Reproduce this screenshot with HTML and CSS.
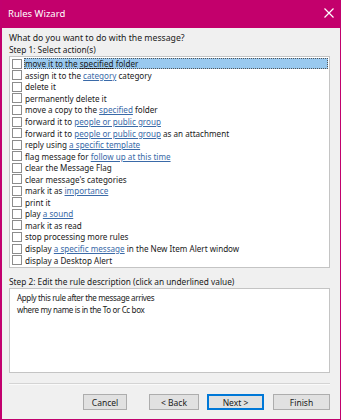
FILE: index.html
```html
<!DOCTYPE html>
<html lang="en">
<head>
    <meta charset="UTF-8">
    <meta name="viewport" content="width=device-width, initial-scale=1.0">
    <title>Rules Wizard</title>
    <link rel="stylesheet" href="styles.css">
</head>
<body>

    <div class="window">
        <div class="title-bar">
            <span class="title">Rules Wizard</span>
            <svg class="close" width="10" height="10" viewBox="0 0 10 10">
                <path d="M0.5 0.5 L9.5 9.5 M9.5 0.5 L0.5 9.5" stroke="#fff" stroke-width="1.2" fill="none"/>
            </svg>
        </div>

        <div class="content">
            <p class="label question">What do you want to do with the message?</p>
            <p class="label">Step 1: Select action(s)</p>

            <ul class="actions">
                <li class="selected"><span class="box"></span><span class="text">move it to the <u>specified</u> folder</span></li>
                <li><span class="box"></span><span class="text">assign it to the <a href="#">category</a> category</span></li>
                <li><span class="box"></span><span class="text">delete it</span></li>
                <li><span class="box"></span><span class="text">permanently delete it</span></li>
                <li><span class="box"></span><span class="text">move a copy to the <a href="#">specified</a> folder</span></li>
                <li><span class="box"></span><span class="text">forward it to <a href="#">people or public group</a></span></li>
                <li><span class="box"></span><span class="text">forward it to <a href="#">people or public group</a> as an attachment</span></li>
                <li><span class="box"></span><span class="text">reply using <a href="#">a specific template</a></span></li>
                <li><span class="box"></span><span class="text">flag message for <a href="#">follow up at this time</a></span></li>
                <li><span class="box"></span><span class="text">clear the Message Flag</span></li>
                <li><span class="box"></span><span class="text">clear message's categories</span></li>
                <li><span class="box"></span><span class="text">mark it as <a href="#">importance</a></span></li>
                <li><span class="box"></span><span class="text">print it</span></li>
                <li><span class="box"></span><span class="text">play <a href="#">a sound</a></span></li>
                <li><span class="box"></span><span class="text">mark it as read</span></li>
                <li><span class="box"></span><span class="text">stop processing more rules</span></li>
                <li><span class="box"></span><span class="text">display <a href="#">a specific message</a> in the New Item Alert window</span></li>
                <li><span class="box"></span><span class="text">display a Desktop Alert</span></li>
            </ul>

            <p class="label step2">Step 2: Edit the rule description (click an underlined value)</p>

            <div class="description">
                <p>Apply this rule after the message arrives</p>
                <p>where my name is in the To or Cc box</p>
            </div>

            <div class="separator"></div>

            <div class="buttons">
                <button class="btn cancel">Cancel</button>
                <button class="btn back">&lt; Back</button>
                <button class="btn next">Next &gt;</button>
                <button class="btn finish">Finish</button>
            </div>
        </div>
    </div>

</body>
</html>
```

FILE: styles.css
```css
body {
    margin: 0;
    font-family: "Noto Sans", "Open Sans", sans-serif;
    font-size: 9px;
    color: #1a1a1a;
}

.window {
    width: 341px;
    height: 420px;
    box-sizing: border-box;
    background-color: #f0f0f0;
    border: 1px solid #c2006e;
    border-top: none;
    border-left-width: 2px;
    display: flex;
    flex-direction: column;
}

.title-bar {
    height: 28px;
    flex-shrink: 0;
    background-color: #c3006c;
    display: flex;
    align-items: center;
    justify-content: space-between;
    padding: 0 6px 2px 6px;
    box-sizing: border-box;
}

.title {
    color: #fff;
    font-size: 9.5px;
}

.close {
    display: block;
}

.content {
    padding: 4px 10px 0 7px;
}

.label {
    margin: 0;
    line-height: 12px;
    font-size: 8.3px;
}

.question {
    font-size: 8.7px;
}

.actions {
    list-style: none;
    margin: 0;
    padding: 1px 1px 1px 0;
    background-color: #fff;
    border: 1px solid #c4c4c4;
    height: 208px;
}

.actions li {
    height: 11.55px;
    display: flex;
    align-items: center;
    font-size: 8.1px;
    white-space: nowrap;
}

.box {
    width: 8px;
    height: 8px;
    border: 1px solid #8c8c8c;
    background-color: #fff;
    margin: 0 2px 0 2px;
    flex-shrink: 0;
}

.text {
    flex: 1;
    line-height: 11px;
    padding-left: 1px;
}

.selected .text {
    background-color: #99c9ef;
    outline: 1px dotted #555;
    outline-offset: -1px;
}

.actions a {
    color: #3a6aa8;
    text-decoration: underline;
}

.step2 {
    margin-top: 8px;
}

.description {
    height: 85px;
    background-color: #fff;
    border: 1px solid #c4c4c4;
    padding: 3px 7px;
    box-sizing: border-box;
}

.description p {
    margin: 0;
    line-height: 12px;
    font-size: 8px;
    letter-spacing: -0.35px;
}

.separator {
    margin-top: 10px;
    border-top: 1px solid #d4d4d4;
    border-bottom: 1px solid #fafafa;
}

.buttons {
    display: flex;
    justify-content: flex-end;
    margin-top: 9px;
}

.btn {
    font-family: "Noto Sans", "Open Sans", sans-serif;
    font-size: 8.5px;
    height: 16px;
    padding: 0;
    background-color: #e1e1e1;
    border: 1px solid #adadad;
    color: #1a1a1a;
}

.cancel {
    width: 44px;
    margin-right: 22px;
}

.back {
    width: 50px;
    margin-right: 8px;
}

.next {
    width: 57px;
    margin-right: 9px;
    border: 1px solid #0078d7;
    box-shadow: inset 0 0 0 1px #0078d7;
}

.finish {
    width: 57px;
}
```
